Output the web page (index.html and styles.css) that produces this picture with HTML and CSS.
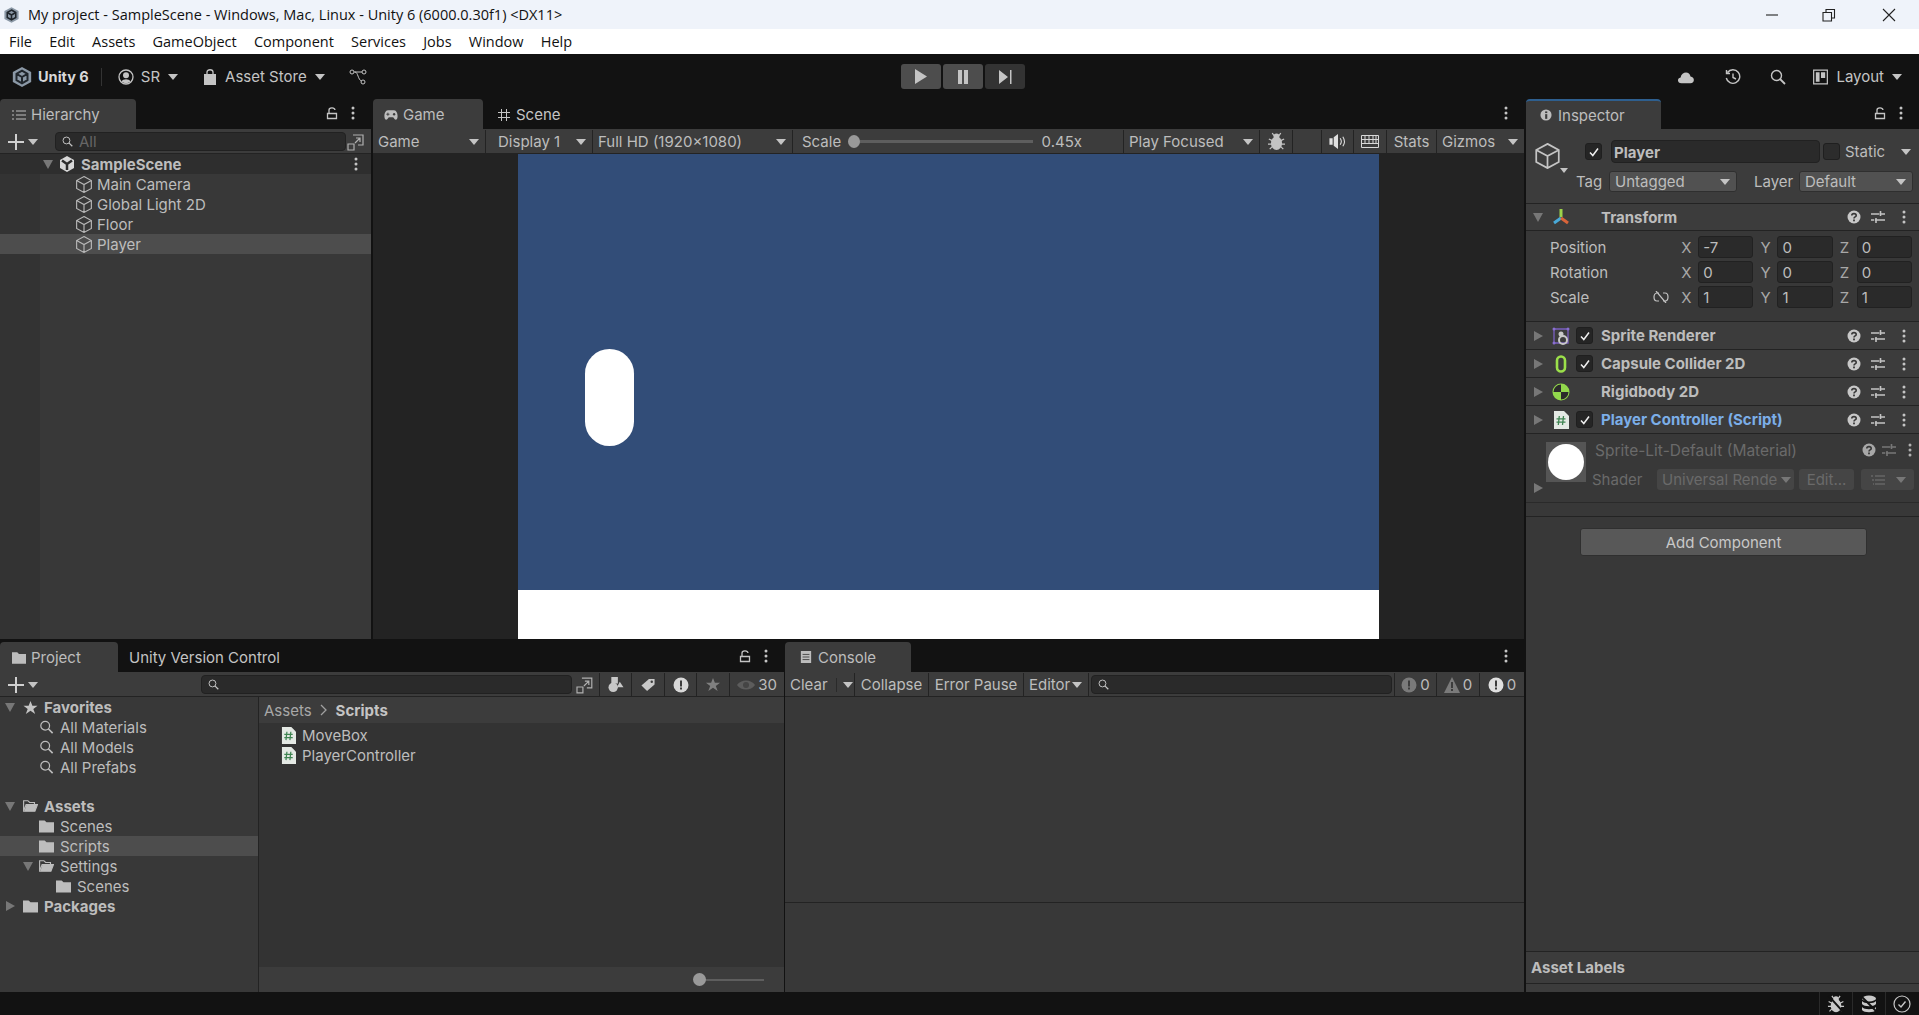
FILE: index.html
```html
<!DOCTYPE html>
<html lang="en">
<head>
    <meta charset="UTF-8">
    <meta name="viewport" content="width=device-width, initial-scale=1.0">
    <title>My project - SampleScene - Unity 6</title>
    <link rel="stylesheet" href="styles.css">
</head>
<body>
    <!-- shared icons -->
    <svg class="defs" width="0" height="0">
        <symbol id="i-logo" viewBox="0 0 24 24">
            <path d="M12 1 22 6.500V17.500L12 23 2 17.500V6.500Z" fill="#8b98a6"/>
            <path d="M12 5 18 8.500V15.500L12 19 6 15.500V8.500ZM12 12V19M12 12 6 8.500M12 12 18 8.500" fill="none" stroke="#20262c" stroke-width="2.200"/>
        </symbol>
        <symbol id="i-cube" viewBox="1 0.500 14 15">
            <path d="M8 1 14.500 4.500V11.500L8 15 1.500 11.500V4.500ZM1.500 4.500 8 8 14.500 4.500M8 8V15" fill="none" stroke="currentColor" stroke-width="1"/>
        </symbol>
        <symbol id="i-dots" viewBox="0 0 4 14">
            <circle cx="2" cy="2" r="1.500" fill="currentColor"/><circle cx="2" cy="7" r="1.500" fill="currentColor"/><circle cx="2" cy="12" r="1.500" fill="currentColor"/>
        </symbol>
        <symbol id="i-lock" viewBox="0 0 12 14">
            <path d="M1.500 7.500H10.500V12.500H1.500ZM3 7.500V4C3 1.500 8.500 1 9 4" fill="none" stroke="currentColor" stroke-width="1.300"/>
        </symbol>
        <symbol id="i-plus" viewBox="0 0 16 16">
            <path d="M8 0V16M0 8H16" stroke="currentColor" stroke-width="2"/>
        </symbol>
        <symbol id="i-search" viewBox="0 0 16 16">
            <circle cx="6.500" cy="6.500" r="5" fill="none" stroke="currentColor" stroke-width="1.400"/>
            <path d="M10 10 15 15" stroke="currentColor" stroke-width="1.800"/>
        </symbol>
        <symbol id="i-expand" viewBox="0 0 18 18">
            <path d="M6 2H16V12H11M1 11H7V17H1ZM8 10 13 5M9 5H13V9" fill="none" stroke="currentColor" stroke-width="1.200"/>
        </symbol>
        <symbol id="i-help" viewBox="0 0 14 14">
            <circle cx="7" cy="7" r="6.500" fill="currentColor"/>
            <path d="M4.800 5.400C4.800 3 9.200 3 9.200 5.400 9.200 7 7 6.800 7 8.400" fill="none" stroke="#383838" stroke-width="1.600"/>
            <rect x="6.100" y="9.500" width="1.800" height="1.800" fill="#383838"/>
        </symbol>
        <symbol id="i-sliders" viewBox="0 0 14 14">
            <path d="M0 4H14M0 10H14" stroke="currentColor" stroke-width="1.300"/>
            <path d="M9.500 1V6M5 8V13" stroke="currentColor" stroke-width="1.600"/>
            <path d="M8 4H8.500M3 10H4" stroke="#383838" stroke-width="1.300"/>
        </symbol>
        <symbol id="i-check" viewBox="0 0 12 12">
            <path d="M2 6.500 4.800 9.500 10 2.500" fill="none" stroke="#eee" stroke-width="1.500"/>
        </symbol>
        <symbol id="i-script" viewBox="0 0 16 18">
            <path d="M1 0H11L16 5V18H1Z" fill="#e4e9e4"/>
            <path d="M6.300 5 5.300 14M10.500 5 9.500 14M3.500 7.800H12.500M3.500 11.200H12.500" stroke="#3f8552" stroke-width="1.300"/>
        </symbol>
        <symbol id="i-folder" viewBox="0 0 16 14">
            <path d="M0 1H6L8 3H16V14H0Z" fill="currentColor"/>
        </symbol>
        <symbol id="i-folder-open" viewBox="0 0 17 14">
            <path d="M.7 13V1H5.500L7.500 3H13V5M.7 13 3.500 5.500H16.300L13.500 13Z" fill="none" stroke="currentColor" stroke-width="1.300"/>
            <path d="M3.800 6H16L13.500 13H1.500Z" fill="currentColor"/>
        </symbol>
        <symbol id="i-bug" viewBox="0 0 20 22">
            <ellipse cx="10" cy="13" rx="6.500" ry="8" fill="currentColor"/>
            <circle cx="10" cy="5" r="3.500" fill="currentColor"/>
            <path d="M5 1 7 4M15 1 13 4M1 8 5 10M19 8 15 10M0 14H5M20 14H15M2 20 5 17M18 20 15 17" stroke="currentColor" stroke-width="1.500"/>
        </symbol>
        <symbol id="i-warn" viewBox="0 0 16 16">
            <circle cx="8" cy="8" r="7.500" fill="currentColor"/>
            <rect x="7" y="3.500" width="2" height="6" fill="#3c3c3c"/><rect x="7" y="10.500" width="2" height="2" fill="#3c3c3c"/>
        </symbol>
    </svg>

    <header class="titlebar">
        <svg class="title-logo"><use href="#i-logo"/></svg>
        <span class="title-text">My project - SampleScene - Windows, Mac, Linux - Unity 6 (6000.0.30f1) &lt;DX11&gt;</span>
        <div class="win-controls">
            <svg width="16" height="16" viewBox="0 0 16 16"><path d="M2 8H14" stroke="#222" stroke-width="1.100"/></svg>
            <svg width="16" height="16" viewBox="0 0 16 16"><path d="M2 5.500H10.500V14H2ZM5 5.500V2.500H13.500V11H10.500" fill="none" stroke="#222" stroke-width="1.100"/></svg>
            <svg class="win-close" width="16" height="16" viewBox="0 0 16 16"><path d="M2 2 14 14M14 2 2 14" stroke="#222" stroke-width="1.100"/></svg>
        </div>
    </header>

    <nav class="menubar">
        <span>File</span><span>Edit</span><span>Assets</span><span>GameObject</span><span>Component</span><span>Services</span><span>Jobs</span><span>Window</span><span>Help</span>
    </nav>

    <div class="toolbar">
        <div class="toolbar-left">
            <svg class="main-logo"><use href="#i-logo"/></svg>
            <b class="unity-name">Unity 6</b>
            <span class="v-line"></span>
            <svg class="account-icon" viewBox="0 0 16 16"><circle cx="8" cy="8" r="7" fill="none" stroke="#c4c4c4" stroke-width="1.300"/><circle cx="8" cy="6.300" r="3" fill="#c4c4c4"/><path d="M3.500 12.500C5 9.500 11 9.500 12.500 12.500 10 14.800 6 14.800 3.500 12.500Z" fill="#c4c4c4"/></svg>
            <span class="acc-name">SR</span>
            <i class="arrow acc-arrow"></i>
            <svg class="bag-icon" viewBox="0 0 14 16"><path d="M1 5H13V16H1Z" fill="#c4c4c4"/><path d="M4 5V3C4 0 10 0 10 3V5" fill="none" stroke="#c4c4c4" stroke-width="1.300"/></svg>
            <span class="store-name">Asset Store</span>
            <i class="arrow store-arrow"></i>
            <svg class="vcs-icon" viewBox="0 0 18 16"><circle cx="3" cy="3" r="2" fill="none" stroke="#c4c4c4"/><circle cx="15" cy="3" r="2" fill="none" stroke="#c4c4c4"/><circle cx="14" cy="13" r="2" fill="none" stroke="#c4c4c4"/><path d="M5 3H13M6 3C9 3 9 11 12.500 12" fill="none" stroke="#c4c4c4"/></svg>
        </div>
        <div class="play-group">
            <button class="play-btn lit"><svg width="12" height="15" viewBox="0 0 12 15"><path d="M0 0 12 7.500 0 15Z" fill="#c4c4c4"/></svg></button>
            <button class="play-btn lit"><svg width="12" height="14" viewBox="0 0 12 14"><path d="M1 0H5V14H1ZM7 0H11V14H7Z" fill="#c4c4c4"/></svg></button>
            <button class="play-btn"><svg width="13" height="14" viewBox="0 0 13 14"><path d="M0 0 9 7 0 14ZM11 0H12.500V14H11Z" fill="#c4c4c4"/></svg></button>
        </div>
        <div class="toolbar-right">
            <svg class="tool-icon" viewBox="0 0 20 14"><path d="M5 14C0 14 0 8 4 7.500 5 1 14 0 15 6.500 20 7 20 14 15 14Z" fill="#c4c4c4"/></svg>
            <svg class="tool-icon" viewBox="0 0 16 16"><path d="M2.500 3.500A6.800 6.800 0 1 1 1.300 9M1.500 1V4.500H5M8 4.500V8.500L11 10" fill="none" stroke="#c4c4c4" stroke-width="1.400"/></svg>
            <svg class="tool-icon tool-search" viewBox="0 0 16 16"><use href="#i-search"/></svg>
            <svg class="layout-icon" viewBox="0 0 16 16"><path d="M.7.7H15.300V15.300H.7Z" fill="none" stroke="#c4c4c4" stroke-width="1.300"/><path d="M3 3H7V13H3ZM8.500 3H13V9H8.500Z" fill="#c4c4c4"/></svg>
            <span class="layout-name">Layout</span>
            <i class="arrow"></i>
        </div>
    </div>

    <main class="dock">
        <div class="dock-left">
            <!-- hierarchy -->
            <section class="panel hierarchy">
                <div class="tabs">
                    <div class="tab hier-tab">
                        <svg class="tab-icon" viewBox="0 0 14 12"><path d="M4 2H14M4 6H14M4 10H14" stroke="currentColor" stroke-width="1"/><path d="M0 2H2M0 6H2M0 10H2" stroke="currentColor"/></svg>
                        Hierarchy
                    </div>
                    <div class="tab-tools">
                        <svg class="lock"><use href="#i-lock"/></svg>
                        <svg class="dots"><use href="#i-dots"/></svg>
                    </div>
                </div>
                <div class="bar hier-bar">
                    <svg class="plus"><use href="#i-plus"/></svg><i class="arrow"></i>
                    <div class="search hier-search">
                        <svg class="search-mini"><use href="#i-search"/></svg><span class="search-hint">All</span>
                    </div>
                    <svg class="expand"><use href="#i-expand"/></svg>
                </div>
                <div class="tree">
                    <div class="scene-row">
                        <i class="arrow down"></i>
                        <svg class="scene-icon" viewBox="0 0 16 16"><path d="M8 0 15 4V12L8 16 1 12V4Z" fill="#d8d8d8"/><path d="M8 8V14M8 8 3 4.500M8 8 13 4.500" stroke="#2e2e2e" stroke-width="2.500"/></svg>
                        <b>SampleScene</b>
                        <svg class="dots row-dots"><use href="#i-dots"/></svg>
                    </div>
                    <div class="obj-row"><svg class="obj-icon"><use href="#i-cube"/></svg>Main Camera</div>
                    <div class="obj-row"><svg class="obj-icon"><use href="#i-cube"/></svg>Global Light 2D</div>
                    <div class="obj-row"><svg class="obj-icon"><use href="#i-cube"/></svg>Floor</div>
                    <div class="obj-row selected"><svg class="obj-icon"><use href="#i-cube"/></svg>Player</div>
                </div>
            </section>

            <!-- game view -->
            <section class="panel game">
                <div class="tabs">
                    <div class="tab game-tab">
                        <svg class="tab-icon" viewBox="0 0 18 12"><path d="M5 0H13C18 0 19 12 15 12 13 12 13 9 11 9H7C5 9 5 12 3 12-1 12 0 0 5 0Z" fill="currentColor"/><path d="M3 5H7M5 3V7" stroke="#3c3c3c" stroke-width="1.200"/><circle cx="13" cy="5" r="1.500" fill="#3c3c3c"/></svg>
                        Game
                    </div>
                    <div class="tab-plain scene-tab">
                        <svg class="tab-icon" viewBox="0 0 12 12"><path d="M3.500 0V12M8.500 0V12M0 3.500H12M0 8.500H12" stroke="currentColor"/></svg>
                        Scene
                    </div>
                    <div class="tab-tools"><svg class="dots"><use href="#i-dots"/></svg></div>
                </div>
                <div class="bar game-bar">
                    <div class="cell spread">Game<i class="arrow"></i></div>
                    <div class="cell spread pad-display">Display 1<i class="arrow"></i></div>
                    <div class="cell spread">Full HD (1920x1080)<i class="arrow"></i></div>
                    <div class="cell scale-cell">Scale<div class="slider"><span class="knob"></span></div>0.45x</div>
                    <div class="cell spread">Play Focused<i class="arrow"></i></div>
                    <div class="cell center"><svg class="bug"><use href="#i-bug"/></svg></div>
                    <div class="cell"></div>
                    <div class="cell center"><svg class="small-icon" viewBox="0 0 16 14"><path d="M0 4H3V10H0ZM4 3 8 0V14L4 11Z" fill="#e0e0e0"/><path d="M10 4C11.500 6 11.500 8 10 10M12.500 2.500C14.500 5.500 14.500 8.500 12.500 11.500" fill="none" stroke="#e0e0e0"/></svg></div>
                    <div class="cell center"><svg class="small-icon" viewBox="0 0 18 13"><path d="M.5.5H17.500V12.500H.5ZM.5 4.500H17.500M.5 8.500H17.500M4 .5V8.500M8 .5V8.500M12 .5V8.500M15 .5V8.500" fill="none" stroke="#d8d8d8"/></svg></div>
                    <div class="cell center">Stats</div>
                    <div class="cell gizmos">Gizmos<span class="thin-sep"></span><i class="arrow"></i></div>
                </div>
                <div class="viewport">
                    <div class="game-screen">
                        <div class="sky"><div class="capsule"></div></div>
                        <div class="ground"></div>
                    </div>
                </div>
            </section>

            <!-- project browser -->
            <section class="panel project">
                <div class="tabs">
                    <div class="tab project-tab">
                        <svg class="tab-icon folder-tab"><use href="#i-folder"/></svg>
                        Project
                    </div>
                    <div class="tab-plain uvc-tab">Unity Version Control</div>
                    <div class="tab-tools">
                        <svg class="lock"><use href="#i-lock"/></svg>
                        <svg class="dots"><use href="#i-dots"/></svg>
                    </div>
                </div>
                <div class="bar project-bar">
                    <div class="cell project-main">
                        <svg class="plus"><use href="#i-plus"/></svg><i class="arrow"></i>
                        <div class="search project-search"><svg class="search-mini"><use href="#i-search"/></svg></div>
                        <svg class="expand"><use href="#i-expand"/></svg>
                    </div>
                    <div class="cell center"><svg class="small-icon" viewBox="0 0 16 16"><rect x="3" y="0" width="7" height="7" fill="#c8c8c8"/><circle cx="5" cy="11" r="5" fill="#c8c8c8"/><path d="M12 5 16 11H9Z" fill="#c8c8c8"/></svg></div>
                    <div class="cell center"><svg class="small-icon" viewBox="0 0 16 16"><path d="M1 9 9 2H15V8L7 15Z" fill="#c8c8c8"/><circle cx="12" cy="5" r="1.300" fill="#3c3c3c"/></svg></div>
                    <div class="cell center"><svg class="warn-big"><use href="#i-warn"/></svg></div>
                    <div class="cell center"><svg class="small-icon" viewBox="0 0 16 16"><path d="M8 1 10 6H15.500L11 9.500 13 15 8 11.500 3 15 5 9.500.5 6H6Z" fill="#808080"/></svg></div>
                    <div class="cell center eye-cell"><svg class="eye" viewBox="0 0 18 10"><path d="M0 5C4-1 14-1 18 5 14 11 4 11 0 5Z" fill="#5c5c5c"/><circle cx="9" cy="5" r="3" fill="#454545"/></svg>30</div>
                </div>
                <div class="project-body">
                    <div class="folders">
                        <div class="f-row bold lvl0"><i class="arrow down"></i><svg class="star" viewBox="0 0 16 16"><path d="M8 1 10 6H15.500L11 9.500 13 15 8 11.500 3 15 5 9.500.5 6H6Z" fill="#c4c4c4"/></svg>Favorites</div>
                        <div class="f-row lvl1"><svg class="f-icon"><use href="#i-search"/></svg>All Materials</div>
                        <div class="f-row lvl1"><svg class="f-icon"><use href="#i-search"/></svg>All Models</div>
                        <div class="f-row lvl1"><svg class="f-icon"><use href="#i-search"/></svg>All Prefabs</div>
                        <div class="f-gap"></div>
                        <div class="f-row bold lvl0"><i class="arrow down"></i><svg class="f-icon"><use href="#i-folder-open"/></svg>Assets</div>
                        <div class="f-row lvl1"><svg class="f-icon"><use href="#i-folder"/></svg>Scenes</div>
                        <div class="f-row lvl1 selected"><svg class="f-icon"><use href="#i-folder"/></svg>Scripts</div>
                        <div class="f-row lvl1 has-arrow"><i class="arrow down"></i><svg class="f-icon"><use href="#i-folder-open"/></svg>Settings</div>
                        <div class="f-row lvl2"><svg class="f-icon"><use href="#i-folder"/></svg>Scenes</div>
                        <div class="f-row bold lvl0"><i class="arrow side"></i><svg class="f-icon"><use href="#i-folder"/></svg>Packages</div>
                        <div class="folders-foot"></div>
                    </div>
                    <div class="files">
                        <div class="crumbs">Assets<svg class="crumb-sep" viewBox="0 0 8 12"><path d="M1 1 6 6 1 11" fill="none" stroke="#a0a0a0" stroke-width="1.300"/></svg><b>Scripts</b></div>
                        <div class="file-list">
                            <div class="file-row"><svg class="file-icon"><use href="#i-script"/></svg>MoveBox</div>
                            <div class="file-row"><svg class="file-icon"><use href="#i-script"/></svg>PlayerController</div>
                        </div>
                        <div class="files-foot"><div class="zoom-track"><span class="zoom-knob"></span></div></div>
                    </div>
                </div>
            </section>

            <!-- console -->
            <section class="panel console">
                <div class="tabs">
                    <div class="tab console-tab">
                        <svg class="tab-icon" viewBox="0 0 12 14"><path d="M0 0H12V14H0Z" fill="currentColor"/><path d="M2 4H10M2 7H10M2 10H10" stroke="#3c3c3c"/></svg>
                        Console
                    </div>
                    <div class="tab-tools"><svg class="dots"><use href="#i-dots"/></svg></div>
                </div>
                <div class="bar console-bar">
                    <div class="cell clear-cell">Clear<span class="thin-sep"></span><i class="arrow"></i></div>
                    <div class="cell center">Collapse</div>
                    <div class="cell center">Error Pause</div>
                    <div class="cell spread">Editor<i class="arrow"></i></div>
                    <div class="cell search-cell"><div class="search console-search"><svg class="search-mini"><use href="#i-search"/></svg></div></div>
                    <div class="cell count dim"><svg class="count-icon"><use href="#i-warn"/></svg>0</div>
                    <div class="cell count dim"><svg class="count-icon" viewBox="0 0 16 16"><path d="M8 0 16 16H0Z" fill="currentColor"/><rect x="7" y="5" width="2" height="6" fill="#3c3c3c"/><rect x="7" y="12" width="2" height="2" fill="#3c3c3c"/></svg>0</div>
                    <div class="cell count"><svg class="count-icon"><use href="#i-warn"/></svg>0</div>
                </div>
                <div class="log-area"></div>
                <div class="log-detail"></div>
            </section>
        </div>

        <!-- inspector -->
        <aside class="panel inspector">
            <div class="tabs">
                <div class="tab insp-tab">
                    <svg class="tab-icon" viewBox="0 0 14 14"><circle cx="7" cy="7" r="6.500" fill="currentColor"/><rect x="6" y="6" width="2.500" height="5.500" fill="#3c3c3c"/><rect x="6" y="2.800" width="2.500" height="2" fill="#3c3c3c"/></svg>
                    Inspector
                </div>
                <div class="tab-tools">
                    <svg class="lock"><use href="#i-lock"/></svg>
                    <svg class="dots"><use href="#i-dots"/></svg>
                </div>
            </div>

            <div class="go-header">
                <svg class="go-cube"><use href="#i-cube"/></svg>
                <i class="arrow go-arrow"></i>
                <div class="go-rows">
                    <div class="go-name">
                        <span class="check"><svg><use href="#i-check"/></svg></span>
                        <div class="name-field"><b>Player</b></div>
                        <span class="check empty"></span>
                        <span class="static-label">Static</span>
                        <i class="arrow"></i>
                    </div>
                    <div class="go-tags">
                        <span class="tag-label">Tag</span>
                        <div class="select tag-select">Untagged<i class="arrow"></i></div>
                        <span class="layer-label">Layer</span>
                        <div class="select layer-select">Default<i class="arrow"></i></div>
                    </div>
                </div>
            </div>

            <div class="comp transform-head">
                <i class="arrow down"></i>
                <svg class="comp-icon" viewBox="0 0 18 18"><path d="M9 1V9" stroke="#9cd34a" stroke-width="3"/><path d="M9 10 2 15" stroke="#49a9d8" stroke-width="3"/><path d="M9 10 16 15" stroke="#d8643a" stroke-width="3"/></svg>
                <span class="no-check"></span>
                <b>Transform</b>
                <div class="comp-actions">
                    <svg class="help"><use href="#i-help"/></svg>
                    <svg class="sliders"><use href="#i-sliders"/></svg>
                    <svg class="dots"><use href="#i-dots"/></svg>
                </div>
            </div>
            <div class="transform-body">
                <div class="vec-row">
                    <span class="vec-label">Position</span>
                    <span class="axis">X</span><div class="field">-7</div>
                    <span class="axis">Y</span><div class="field">0</div>
                    <span class="axis">Z</span><div class="field">0</div>
                </div>
                <div class="vec-row">
                    <span class="vec-label">Rotation</span>
                    <span class="axis">X</span><div class="field">0</div>
                    <span class="axis">Y</span><div class="field">0</div>
                    <span class="axis">Z</span><div class="field">0</div>
                </div>
                <div class="vec-row">
                    <span class="vec-label">Scale<svg class="unlink" viewBox="0 0 16 12"><path d="M6 2H4C0 2 0 10 4 10H6M10 2H12C16 2 16 10 12 10H10M3 0 13 12" fill="none" stroke="#c4c4c4" stroke-width="1.200"/></svg></span>
                    <span class="axis">X</span><div class="field">1</div>
                    <span class="axis">Y</span><div class="field">1</div>
                    <span class="axis">Z</span><div class="field">1</div>
                </div>
            </div>

            <div class="comp">
                <i class="arrow side"></i>
                <svg class="comp-icon" viewBox="0 0 18 18"><path d="M2 2H16V16H2Z" fill="none" stroke="#7a5fc0" stroke-width="1.300"/><circle cx="2" cy="2" r="1.500" fill="#8a6fd0"/><circle cx="16" cy="2" r="1.500" fill="#8a6fd0"/><circle cx="2" cy="16" r="1.500" fill="#8a6fd0"/><circle cx="9" cy="7" r="2.500" fill="#c8c8c8"/><circle cx="11" cy="13" r="4" fill="none" stroke="#c8c8c8" stroke-width="2"/></svg>
                <span class="check"><svg><use href="#i-check"/></svg></span>
                <b>Sprite Renderer</b>
                <div class="comp-actions"><svg class="help"><use href="#i-help"/></svg><svg class="sliders"><use href="#i-sliders"/></svg><svg class="dots"><use href="#i-dots"/></svg></div>
            </div>
            <div class="comp">
                <i class="arrow side"></i>
                <svg class="comp-icon" viewBox="0 0 18 18"><rect x="5" y="1.500" width="8" height="15" rx="4" fill="none" stroke="#9be04a" stroke-width="2.600"/></svg>
                <span class="check"><svg><use href="#i-check"/></svg></span>
                <b>Capsule Collider 2D</b>
                <div class="comp-actions"><svg class="help"><use href="#i-help"/></svg><svg class="sliders"><use href="#i-sliders"/></svg><svg class="dots"><use href="#i-dots"/></svg></div>
            </div>
            <div class="comp">
                <i class="arrow side"></i>
                <svg class="comp-icon" viewBox="0 0 18 18"><circle cx="9" cy="9" r="8.500" fill="#92d94c"/><path d="M9 9V1.500A7.500 7.500 0 0 0 1.500 9ZM9 9V16.500A7.500 7.500 0 0 0 16.500 9Z" fill="#2b2b2b"/></svg>
                <span class="no-check"></span>
                <b>Rigidbody 2D</b>
                <div class="comp-actions"><svg class="help"><use href="#i-help"/></svg><svg class="sliders"><use href="#i-sliders"/></svg><svg class="dots"><use href="#i-dots"/></svg></div>
            </div>
            <div class="comp">
                <i class="arrow side"></i>
                <svg class="comp-icon" viewBox="0 0 16 18"><use href="#i-script"/></svg>
                <span class="check"><svg><use href="#i-check"/></svg></span>
                <b class="script-name">Player Controller (Script)</b>
                <div class="comp-actions"><svg class="help"><use href="#i-help"/></svg><svg class="sliders"><use href="#i-sliders"/></svg><svg class="dots"><use href="#i-dots"/></svg></div>
            </div>

            <div class="material">
                <i class="arrow side mat-arrow"></i>
                <div class="mat-thumb"><span class="mat-ball"></span></div>
                <div class="mat-rows">
                    <div class="mat-title">
                        <span>Sprite-Lit-Default (Material)</span>
                        <div class="mat-actions"><svg class="help"><use href="#i-help"/></svg><svg class="sliders"><use href="#i-sliders"/></svg><svg class="dots"><use href="#i-dots"/></svg></div>
                    </div>
                    <div class="mat-shader">
                        <span class="shader-label">Shader</span>
                        <div class="mat-btn shader-select">Universal Rende<i class="arrow"></i></div>
                        <div class="mat-btn edit-btn">Edit...</div>
                        <div class="mat-btn list-btn"><svg class="list-icon" viewBox="0 0 14 12"><path d="M4 2H14M4 6H14M4 10H14M0 2H2M1 6H3M2 10H3" stroke="#777"/></svg><i class="arrow"></i></div>
                    </div>
                </div>
            </div>
            <div class="mat-foot"></div>

            <div class="add-wrap"><button class="add-btn">Add Component</button></div>

            <div class="labels"><b>Asset Labels</b></div>
            <div class="labels-foot"></div>
        </aside>
    </main>

    <footer class="statusbar">
        <div class="status-cell"><svg class="status-icon" viewBox="0 0 20 22"><use href="#i-bug"/><path d="M1 1 19 21" stroke="#121212" stroke-width="2.500"/></svg></div>
        <div class="status-cell"><svg class="status-icon" viewBox="0 0 18 18"><ellipse cx="9" cy="3.500" rx="7" ry="3" fill="#c8c8c8"/><path d="M2 6C4 9 14 9 16 6V9C14 12 4 12 2 9ZM2 12C4 15 14 15 16 12V15C14 18 4 18 2 15Z" fill="#c8c8c8"/><path d="M1 1 17 17" stroke="#121212" stroke-width="2"/></svg></div>
        <div class="status-cell"><svg class="status-icon" viewBox="0 0 18 18"><circle cx="9" cy="9" r="8" fill="none" stroke="#c8c8c8" stroke-width="1.200"/><path d="M5.500 9.500 8 12 12.500 6.500" fill="none" stroke="#c8c8c8" stroke-width="1.400"/></svg></div>
    </footer>
</body>
</html>
```

FILE: styles.css
```css
* {
    box-sizing: border-box;
}

html, body {
    margin: 0;
    height: 100%;
    overflow: hidden;
}

body {
    display: flex;
    flex-direction: column;
    background: #121212;
    color: #bdbdbd;
    font-family: Inter, "Liberation Sans", sans-serif;
    font-size: 15px;
}

b {
    font-weight: 700;
}

button {
    font: inherit;
    color: inherit;
    border: none;
    padding: 0;
}

.defs {
    position: absolute;
}

/* generic little triangle */
.arrow {
    display: inline-block;
    flex: none;
    width: 0;
    height: 0;
    border-left: 5px solid transparent;
    border-right: 5px solid transparent;
    border-top: 6px solid #c4c4c4;
}

.arrow.down {
    border-left-width: 5px;
    border-right-width: 5px;
    border-top: 9px solid #777;
}

.arrow.side {
    border-top: 5px solid transparent;
    border-bottom: 5px solid transparent;
    border-left: 9px solid #777;
    border-right: none;
}

/* window chrome */
.titlebar {
    height: 29px;
    flex: none;
    display: flex;
    align-items: center;
    background: #eff3fa;
    color: #111;
    font-family: "Open Sans", "Noto Sans", sans-serif;
    font-size: 14.500px;
}

.title-logo {
    width: 17px;
    height: 18px;
    margin: 0 8px 0 3px;
}

.win-controls {
    margin-left: auto;
    display: flex;
    gap: 41px;
    margin-right: 22px;
}

.win-close {
    margin-left: 3px;
}

.menubar {
    height: 25px;
    flex: none;
    display: flex;
    align-items: center;
    gap: 17.200px;
    padding-left: 9px;
    background: #fff;
    color: #111;
    font-family: "Open Sans", "Noto Sans", sans-serif;
    font-size: 14.500px;
}

.toolbar {
    height: 45px;
    flex: none;
    display: grid;
    grid-template-columns: 901px 124px 1fr;
    align-items: center;
    background: #121212;
    color: #c4c4c4;
}

.toolbar-left, .toolbar-right {
    display: flex;
    align-items: center;
}

.main-logo {
    width: 22px;
    height: 24px;
    margin-left: 11px;
}

.unity-name {
    margin-left: 5px;
    color: #d8d8d8;
    font-size: 14.500px;
}

.v-line {
    width: 1px;
    height: 18px;
    margin: 0 16px 0 12px;
    background: #333;
}

.account-icon {
    width: 16px;
    height: 16px;
}

.acc-name {
    margin-left: 7px;
}

.acc-arrow {
    margin-left: 8px;
}

.bag-icon {
    width: 14px;
    height: 16px;
    margin-left: 25px;
}

.store-name {
    margin-left: 8px;
}

.store-arrow {
    margin-left: 8px;
}

.vcs-icon {
    width: 18px;
    height: 16px;
    margin-left: 24px;
}

.play-group {
    display: flex;
    gap: 2px;
}

.play-btn {
    width: 40px;
    height: 25px;
    display: flex;
    align-items: center;
    justify-content: center;
    background: #333;
    border-radius: 3px;
}

.play-btn.lit {
    background: #4d4d4d;
}

.toolbar-right {
    justify-content: flex-end;
    padding-right: 17px;
}

.tool-icon {
    width: 18px;
    height: 16px;
    margin-right: 29px;
}

.tool-search {
    margin-left: -2px;
    margin-right: 31px;
}

.layout-icon {
    width: 15px;
    height: 16px;
    margin-left: -5px;
    margin-right: 8px;
}

.layout-name {
    margin-right: 8px;
}

/* dock area */
.dock {
    flex: 1;
    display: grid;
    grid-template-columns: 1fr 393px;
    gap: 2px;
    min-height: 0;
}

.dock-left {
    display: grid;
    grid-template-columns: 373px 411px 1fr;
    grid-template-rows: 540px 1fr;
    row-gap: 1px;
    column-gap: 0;
}

.panel {
    display: flex;
    flex-direction: column;
    min-width: 0;
    min-height: 0;
    background: #383838;
}

.hierarchy {
    grid-column: 1;
    grid-row: 1;
    margin-right: 2px;
}

.game {
    grid-column: 2 / 4;
    grid-row: 1;
}

.project {
    grid-column: 1 / 3;
    grid-row: 2;
}

.console {
    grid-column: 3;
    grid-row: 2;
    margin-left: 1px;
}

.tabs {
    height: 30px;
    flex: none;
    display: flex;
    align-items: flex-end;
    background: #121212;
}

.project .tabs, .console .tabs {
    height: 32px;
}

.tab, .tab-plain {
    height: 30px;
    display: flex;
    align-items: center;
    gap: 5px;
    padding-left: 11px;
}

.hierarchy .tab, .game .tab, .game .tab-plain {
    padding-top: 1px;
}

.tab {
    background: #3c3c3c;
    border-radius: 4px 4px 0 0;
}

.tab-plain {
    color: #c4c4c4;
}

.tab-icon {
    width: 14px;
    height: 12px;
    flex: none;
}

.hier-tab {
    width: 136px;
    padding-left: 12px;
}

.game-tab {
    width: 110px;
}

.scene-tab {
    padding-left: 14px;
}

.project-tab {
    width: 118px;
    padding-left: 12px;
}

.folder-tab {
    height: 13px;
}

.uvc-tab {
    padding-left: 11px;
}

.console-tab {
    width: 126px;
    padding-left: 14px;
}

.insp-tab {
    width: 135px;
    padding-left: 13px;
    border-top: 2px solid #2e5f8f;
}

.tab-tools {
    margin-left: auto;
    height: 30px;
    display: flex;
    align-items: center;
    gap: 13px;
    padding: 0 16px 3px 0;
    color: #c4c4c4;
}

.lock {
    width: 12px;
    height: 14px;
}

.dots {
    width: 4px;
    height: 14px;
    color: #c4c4c4;
}

.bar {
    height: 25px;
    flex: none;
    padding-top: 1px;
    background: #3c3c3c;
    border-bottom: 1px solid #232323;
}

.cell {
    height: 100%;
    display: flex;
    align-items: center;
    padding: 0 5px;
    border-right: 1px solid #232323;
    white-space: nowrap;
    min-width: 0;
}

.cell:last-child {
    border-right: none;
}

.center {
    justify-content: center;
}

.spread {
    justify-content: space-between;
    padding-right: 6px;
}

.plus {
    width: 16px;
    height: 16px;
    flex: none;
    margin: 0 4px 0 2px;
    color: #d0d0d0;
}

.search {
    display: flex;
    align-items: center;
    height: 19px;
    padding-left: 6px;
    background: #2a2a2a;
    border: 1px solid #212121;
    border-radius: 4px;
}

.search-mini {
    width: 11px;
    height: 11px;
    color: #c4c4c4;
}

.expand {
    width: 18px;
    height: 18px;
    margin-left: 4px;
    color: #b0b0b0;
}

/* hierarchy */
.hier-bar {
    display: flex;
    align-items: center;
    padding-left: 6px;
}

.hier-search {
    width: 291px;
    margin-left: 17px;
    gap: 6px;
}

.hier-search + .expand {
    margin-left: 1px;
}

.search-hint {
    color: #666;
}

.tree {
    flex: 1;
    background: linear-gradient(to right, #333 40px, #383838 40px);
}

.scene-row {
    height: 20px;
    display: flex;
    align-items: center;
    padding-left: 43px;
    background: #2e2e2e;
}

.scene-row b {
    margin-left: 6px;
}

.scene-icon {
    width: 16px;
    height: 16px;
    margin-left: 6px;
}

.row-dots {
    margin-left: auto;
    margin-right: 13px;
}

.obj-row {
    height: 20px;
    display: flex;
    align-items: center;
    gap: 5px;
    padding-left: 76px;
}

.obj-row.selected {
    background: #4d4d4d;
}

.obj-icon {
    width: 16px;
    height: 17px;
    color: #b8b8b8;
}

/* game view */
.game-bar {
    display: grid;
    grid-template-columns: 113px 107px 200px 331px 136px 33px 29px 32px 33px 50px 1fr;
}

.pad-display {
    padding-left: 12px;
}

.scale-cell {
    padding-left: 9px;
    padding-right: 41px;
    justify-content: space-between;
}

.slider {
    position: relative;
    width: 179px;
    height: 3px;
    margin: 0 8px 0 12px;
    background: #5e5e5e;
}

.knob {
    position: absolute;
    left: -6px;
    top: -5px;
    width: 12px;
    height: 13px;
    border-radius: 50%;
    background: #999;
}

.bug {
    width: 17px;
    height: 19px;
    color: #c4c4c4;
}

.small-icon {
    width: 18px;
    height: 15px;
}

.gizmos {
    padding-right: 6px;
}

.thin-sep {
    width: 1px;
    height: 14px;
    margin: 0 6px 0 7px;
    background: #2a2a2a;
}

.viewport {
    flex: 1;
    display: grid;
    grid-template-columns: 145px 861px 1fr;
    background: #232323;
    min-height: 0;
}

.game-screen {
    grid-column: 2;
    display: flex;
    flex-direction: column;
}

.sky {
    position: relative;
    height: 436px;
    background: #324d78;
}

.ground {
    flex: 1;
    background: #fff;
}

.capsule {
    position: absolute;
    left: 67px;
    top: 195px;
    width: 49px;
    height: 97px;
    border-radius: 25px;
    background: #fff;
}

/* project browser */
.project-bar {
    display: grid;
    grid-template-columns: 600px 32px 33px 32px 33px 54px;
}

.project-main {
    padding-left: 6px;
}

.project-search {
    width: 376px;
    margin-left: 163px;
}

.warn-big {
    width: 16px;
    height: 16px;
    color: #d8d8d8;
}

.eye-cell {
    gap: 3px;
    padding: 0;
}

.eye {
    width: 18px;
    height: 10px;
}

.project-body {
    flex: 1;
    display: grid;
    grid-template-columns: 259px 1fr;
    min-height: 0;
}

.folders {
    display: flex;
    flex-direction: column;
    border-right: 1px solid #232323;
}

.f-row {
    height: 20px;
    flex: none;
    display: flex;
    align-items: center;
    gap: 6px;
}

.f-gap {
    height: 20px;
    flex: none;
    margin-bottom: -1px;
}

.bold {
    font-weight: 700;
}

.lvl0 {
    padding-left: 5px;
}

.lvl0 .arrow {
    margin-right: 2px;
}

.lvl0 .arrow.side {
    margin-right: 2px;
    margin-left: 1px;
}

.lvl1 {
    padding-left: 39px;
}

.lvl1.has-arrow {
    padding-left: 23px;
}

.lvl2 {
    padding-left: 56px;
}

.f-row.selected {
    background: #4d4d4d;
}

.star {
    width: 15px;
    height: 15px;
}

.f-icon {
    width: 15px;
    height: 14px;
    color: #bdbdbd;
}

.folders-foot {
    margin-top: auto;
    height: 25px;
    background: #383838;
}

.files {
    display: flex;
    flex-direction: column;
    background: #333;
    min-height: 0;
}

.crumbs {
    height: 26px;
    flex: none;
    display: flex;
    align-items: center;
    padding-left: 5px;
    background: #3c3c3c;
    color: #a8a8a8;
}

.crumb-sep {
    width: 8px;
    height: 12px;
    margin: 0 8px;
}

.crumbs b {
    color: #c4c4c4;
}

.file-list {
    flex: 1;
    padding-top: 2px;
}

.file-row {
    height: 20px;
    display: flex;
    align-items: center;
    gap: 6px;
    padding-left: 22px;
}

.file-icon {
    width: 15px;
    height: 17px;
}

.files-foot {
    height: 25px;
    flex: none;
    display: flex;
    align-items: center;
    justify-content: flex-end;
    padding-right: 20px;
    background: #3c3c3c;
}

.zoom-track {
    position: relative;
    width: 64px;
    height: 2px;
    background: #5e5e5e;
}

.zoom-knob {
    position: absolute;
    left: -7px;
    top: -6px;
    width: 13px;
    height: 13px;
    border-radius: 50%;
    background: #999;
}

/* console */
.console-bar {
    display: grid;
    grid-template-columns: 70px 74px 95px 65px 306px 42px 43px 1fr;
}

.clear-cell {
    padding-right: 0;
}

.clear-cell .thin-sep {
    margin: 0 6px 0 8px;
}

.search-cell {
    padding: 0 2px;
}

.console-search {
    width: 100%;
}

.count {
    justify-content: center;
    gap: 3px;
    padding: 0;
}

.count-icon {
    width: 16px;
    height: 16px;
    color: #e0e0e0;
}

.dim .count-icon {
    color: #7a7a7a;
}

.log-area {
    height: 206px;
    flex: none;
    border-bottom: 1px solid #232323;
}

.log-detail {
    flex: 1;
}

/* inspector */
.inspector {
    background: #383838;
}

.inspector .tabs {
    height: 30px;
}

.go-header {
    height: 75px;
    flex: none;
    position: relative;
    display: flex;
    padding: 11px 0 0 9px;
    background: #3c3c3c;
    border-bottom: 1px solid #232323;
}

.go-cube {
    width: 25px;
    height: 26px;
    flex: none;
    margin-top: 3px;
    color: #c4c4c4;
}

.go-arrow {
    position: absolute;
    left: 34px;
    top: 39px;
    border-left-width: 4px;
    border-right-width: 4px;
    border-top-width: 5px;
}

.go-rows {
    flex: 1;
    display: flex;
    flex-direction: column;
    gap: 8px;
}

.go-name {
    height: 23px;
    display: flex;
    align-items: center;
    padding-left: 25px;
}

.check {
    width: 17px;
    height: 17px;
    flex: none;
    display: flex;
    align-items: center;
    justify-content: center;
    background: #252525;
    border: 1px solid #1f1f1f;
    border-radius: 3px;
}

.check svg {
    width: 12px;
    height: 12px;
}

.check.empty {
    background: #2c2c2c;
    margin-left: 3px;
}

.name-field {
    width: 209px;
    height: 23px;
    margin-left: 9px;
    padding-left: 2px;
    line-height: 24px;
    background: #2a2a2a;
    border: 1px solid #212121;
    border-radius: 4px;
}

.static-label {
    margin-left: 5px;
    margin-right: 16px;
}

.go-tags {
    height: 21px;
    display: flex;
    align-items: center;
    padding-left: 16px;
}

.select {
    height: 21px;
    display: flex;
    align-items: center;
    justify-content: space-between;
    padding: 0 6px 0 5px;
    background: #515151;
    border: 1px solid #2f2f2f;
    border-radius: 3px;
}

.tag-label {
    width: 33px;
}

.tag-select {
    width: 128px;
}

.layer-label {
    margin-left: 17px;
    width: 45px;
}

.layer-select {
    width: 114px;
}

.comp {
    height: 28px;
    flex: none;
    display: flex;
    align-items: center;
    padding-left: 7px;
    background: #3c3c3c;
    border-bottom: 1px solid #232323;
    white-space: nowrap;
}

.comp > .arrow {
    margin-right: 9px;
    margin-left: 1px;
}

.comp > .arrow.down {
    margin-right: 9px;
    margin-left: 0;
}

.comp-icon {
    width: 18px;
    height: 18px;
    flex: none;
    margin-right: 6px;
}

.no-check {
    width: 17px;
    flex: none;
}

.comp b {
    margin-left: 8px;
}

.script-name {
    color: #7baee8;
}

.comp-actions, .mat-actions {
    margin-left: auto;
    display: flex;
    align-items: center;
    gap: 10px;
    padding-right: 13px;
}

.help {
    width: 14px;
    height: 14px;
    color: #c8c8c8;
}

.sliders {
    width: 14px;
    height: 14px;
    color: #c4c4c4;
    margin-right: 7px;
}

.transform-head {
    height: 27px;
}

.transform-body {
    height: 91px;
    flex: none;
    display: flex;
    flex-direction: column;
    gap: 3px;
    padding-top: 5px;
    background: #383838;
    border-bottom: 1px solid #232323;
}

.vec-row {
    height: 22px;
    display: flex;
    align-items: center;
}

.vec-label {
    width: 157px;
    padding: 0 12px 0 24px;
    display: flex;
    align-items: center;
    justify-content: space-between;
}

.unlink {
    width: 16px;
    height: 12px;
}

.axis {
    width: 17px;
    flex: none;
    color: #a8a8a8;
}

.field {
    width: 56px;
    height: 22px;
    margin-right: 7px;
    padding-left: 4px;
    line-height: 21px;
    background: #2a2a2a;
    border: 1px solid #212121;
    border-radius: 3px;
}

.material {
    height: 69px;
    flex: none;
    position: relative;
    display: flex;
    padding: 8px 0 0 20px;
    color: #6a6a6a;
    background: #383838;
    border-bottom: 1px solid #2a2a2a;
}

.mat-arrow {
    position: absolute;
    left: 8px;
    top: 49px;
    border-left-color: #666;
}

.mat-thumb {
    width: 40px;
    height: 40px;
    flex: none;
    display: flex;
    align-items: center;
    justify-content: center;
    background: #555;
}

.mat-ball {
    width: 36px;
    height: 36px;
    border-radius: 50%;
    background: #fff;
}

.mat-rows {
    flex: 1;
    display: flex;
    flex-direction: column;
    gap: 11px;
    padding-left: 6px;
}

.mat-title {
    display: flex;
    align-items: center;
    height: 16px;
    padding-left: 3px;
    font-size: 15.500px;
}

.mat-actions {
    padding-right: 7px;
    gap: 6px;
}

.mat-actions .help {
    color: #a8a8a8;
}

.mat-actions .sliders {
    color: #777;
    margin-right: 3px;
}

.mat-actions .dots {
    color: #b0b0b0;
    margin-left: 3px;
}

.mat-shader {
    display: flex;
    align-items: center;
    gap: 5px;
    height: 21px;
}

.shader-label {
    width: 60px;
    flex: none;
}

.mat-btn {
    height: 21px;
    display: flex;
    align-items: center;
    padding: 0 3px 0 5px;
    background: #454545;
    border-radius: 3px;
    white-space: nowrap;
    overflow: hidden;
}

.mat-btn .arrow {
    border-top-color: #777;
}

.shader-select {
    width: 137px;
    justify-content: space-between;
    flex: none;
}

.edit-btn {
    width: 55px;
    flex: none;
    justify-content: center;
    padding: 0;
}

.list-btn {
    width: 53px;
    flex: none;
    margin-left: 2px;
    justify-content: space-around;
}

.list-icon {
    width: 14px;
    height: 12px;
}

.mat-foot {
    height: 14px;
    flex: none;
    border-bottom: 1px solid #232323;
}

.add-wrap {
    flex: 1;
    display: flex;
    justify-content: flex-start;
    padding: 11px 0 0 54px;
    border-bottom: 1px solid #232323;
}

.add-btn {
    width: 287px;
    height: 28px;
    background: #585858;
    border: 1px solid #2f2f2f;
    border-radius: 3px;
    color: #c8c8c8;
}

.labels {
    height: 32px;
    flex: none;
    display: flex;
    align-items: center;
    padding-left: 5px;
    background: #3c3c3c;
    border-bottom: 1px solid #232323;
}

.labels-foot {
    height: 8px;
    flex: none;
    background: #3c3c3c;
}

/* status bar */
.statusbar {
    height: 23px;
    flex: none;
    display: flex;
    justify-content: flex-end;
    padding-right: 1px;
    background: #121212;
}

.status-cell {
    width: 33px;
    display: flex;
    align-items: center;
    justify-content: center;
    border-left: 1px solid #2a2a2a;
    color: #c8c8c8;
}

.status-icon {
    width: 18px;
    height: 18px;
}
```
